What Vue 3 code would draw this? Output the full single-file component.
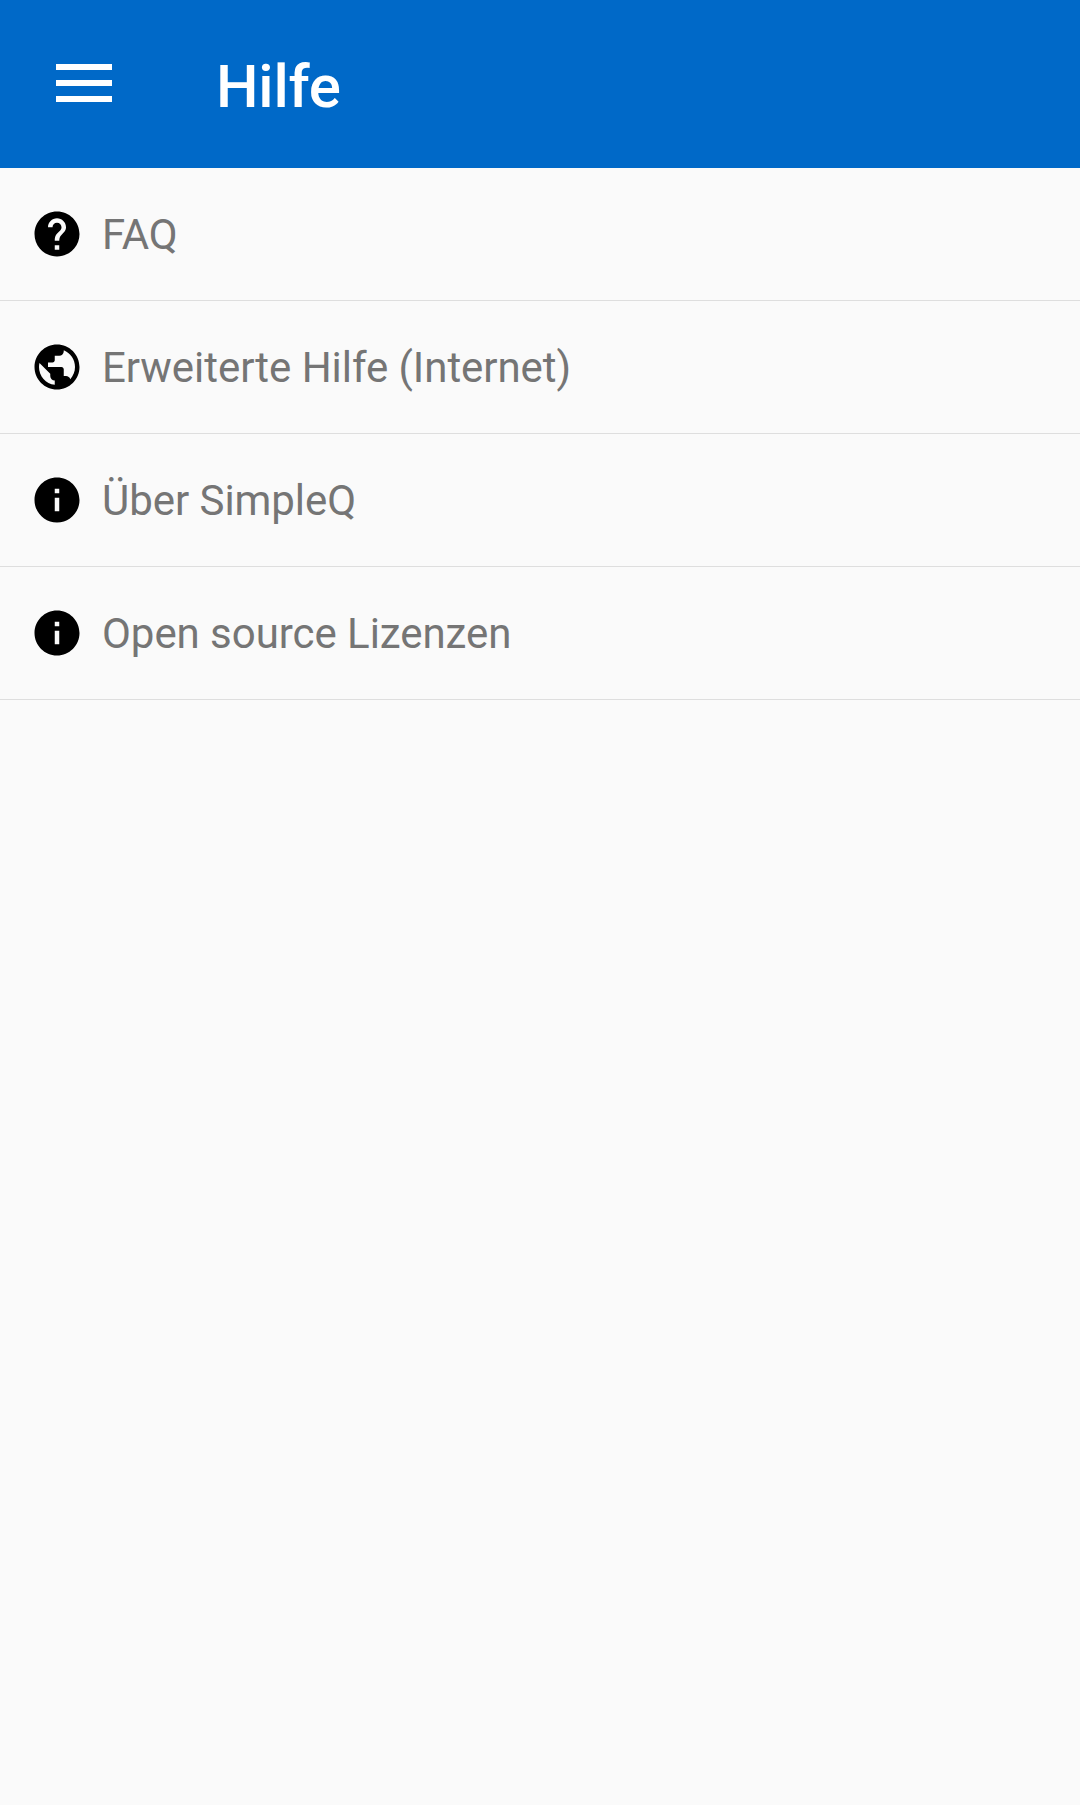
<script setup>
const icons = {
  help: 'M12 2C6.48 2 2 6.48 2 12s4.48 10 10 10 10-4.48 10-10S17.52 2 12 2zm1 17h-2v-2h2v2zm2.07-7.75l-.9.92C13.45 12.9 13 13.5 13 15h-2v-.5c0-1.1.45-2.1 1.17-2.83l1.24-1.26c.37-.36.59-.86.59-1.41 0-1.1-.9-2-2-2s-2 .9-2 2H8c0-2.21 1.79-4 4-4s4 1.79 4 4c0 .88-.36 1.68-.93 2.25z',
  globe: 'M12 2C6.48 2 2 6.48 2 12s4.48 10 10 10 10-4.48 10-10S17.52 2 12 2zm-1 17.93c-3.95-.49-7-3.85-7-7.93 0-.62.08-1.21.21-1.79L9 15v1c0 1.1.9 2 2 2v1.93zm6.9-2.54c-.26-.81-1-1.39-1.9-1.39h-1v-3c0-.55-.45-1-1-1H8v-2h2c.55 0 1-.45 1-1V7h2c1.1 0 2-.9 2-2v-.41c2.93 1.19 5 4.06 5 7.41 0 2.08-.8 3.97-2.1 5.39z',
  info: 'M12 2C6.48 2 2 6.48 2 12s4.48 10 10 10 10-4.48 10-10S17.52 2 12 2zm1 15h-2v-6h2v6zm0-8h-2V7h2v2z',
}
const items = [
  { label: 'FAQ', icon: icons.help },
  { label: 'Erweiterte Hilfe (Internet)', icon: icons.globe },
  { label: 'Über SimpleQ', icon: icons.info },
  { label: 'Open source Lizenzen', icon: icons.info },
]
</script>

<template>
  <div class="screen">
    <header class="bar">
      <svg class="menu" viewBox="0 0 56 38"><path fill="#fff" d="M0 0h56v6H0zM0 16h56v6H0zM0 32h56v6H0z" /></svg>
      <h1 class="title">Hilfe</h1>
    </header>
    <ul class="list">
      <li v-for="item in items" :key="item.label" class="row">
        <svg class="icon" viewBox="0 0 24 24"><path :d="item.icon" /></svg>
        <span class="label">{{ item.label }}</span>
      </li>
    </ul>
  </div>
</template>

<style>
body {
  background: #fafafa;
}
</style>

<style scoped>
.screen {
  min-height: 1805px;
  background: #fafafa;
  font-family: Roboto, sans-serif;
}
.bar {
  display: flex;
  align-items: flex-start;
  box-sizing: border-box;
  height: 168px;
  padding-left: 56px;
  background: #0069c8;
}
.menu {
  width: 56px;
  height: 38px;
  margin-top: 64px;
}
.title {
  margin: 52px 0 0 104px;
  font-size: 60px;
  line-height: 70px;
  font-weight: 500;
  letter-spacing: -0.2px;
  color: #fff;
}
.list {
  margin: 0;
  padding: 0;
  list-style: none;
}
.row {
  display: flex;
  align-items: center;
  box-sizing: border-box;
  height: 133px;
  padding-left: 30px;
  border-bottom: 1px solid #dedede;
}
.icon {
  width: 54px;
  height: 54px;
}
.label {
  margin: 2px 0 0 18px;
  font-size: 42px;
  line-height: 50px;
  letter-spacing: -0.05px;
  color: #757575;
}
</style>
